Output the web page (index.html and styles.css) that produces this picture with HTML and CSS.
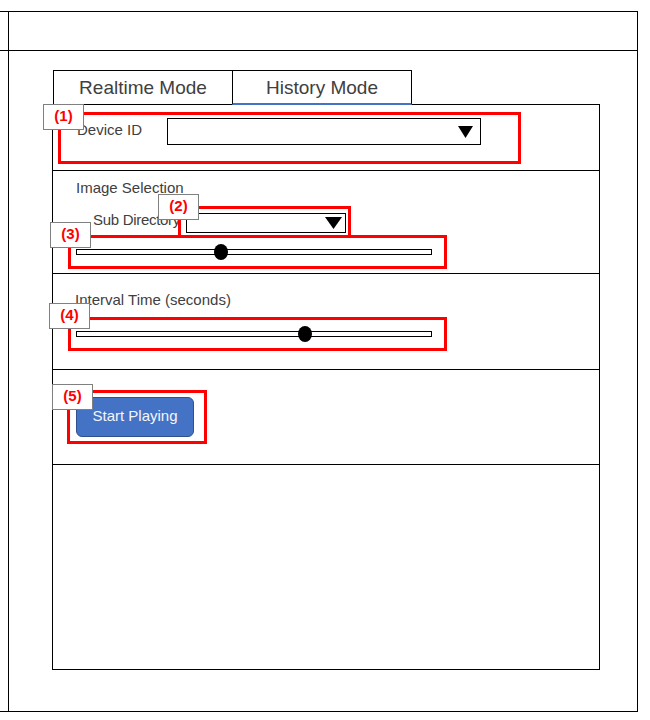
FILE: index.html
```html
<!DOCTYPE html>
<html lang="en">
<head>
<meta charset="utf-8">
<title>History Mode</title>
<link rel="stylesheet" href="styles.css">
</head>
<body>
<div class="frame">
  <div class="side"></div>
  <div class="head"></div>
  <div class="side side-body"></div>
  <div class="main">
    <div class="tabs">
      <div class="tab">Realtime Mode</div>
      <div class="tab tab-active">History Mode</div>
    </div>
    <div class="panel">
      <section class="sec sec-device">
        <div class="mark mark-device">
          <span class="badge badge-1">(1)</span>
          <span class="label label-device">Device ID</span>
          <div class="select select-device">
            <svg class="caret caret-lg" width="15" height="12" viewBox="0 0 15 12"><polygon points="0,0 15,0 7.5,12" fill="#000"/></svg>
          </div>
        </div>
      </section>
      <section class="sec sec-image">
        <div class="label label-title">Image Selection</div>
        <div class="subrow">
          <span class="label label-sub">Sub Directory</span>
          <div class="mark mark-subdir">
            <span class="badge badge-2">(2)</span>
            <div class="select select-sub">
              <svg class="caret caret-sm" width="17" height="12" viewBox="0 0 17 12"><polygon points="0,0 17,0 8.5,12" fill="#000"/></svg>
            </div>
          </div>
        </div>
        <div class="mark mark-slider mark-slider-3">
          <span class="badge badge-3">(3)</span>
          <div class="track"><span class="thumb" style="left:40.7%"></span></div>
        </div>
      </section>
      <section class="sec sec-interval">
        <div class="label label-interval">Interval Time (seconds)</div>
        <div class="mark mark-slider mark-slider-4">
          <span class="badge badge-4">(4)</span>
          <div class="track"><span class="thumb" style="left:64.3%"></span></div>
        </div>
      </section>
      <section class="sec sec-action">
        <div class="mark mark-button">
          <span class="badge badge-5">(5)</span>
          <button class="btn" type="button">Start Playing</button>
        </div>
      </section>
      <section class="sec sec-empty"></section>
    </div>
  </div>
</div>
</body>
</html>
```

FILE: styles.css
```css
* {
  box-sizing: border-box;
}

html, body {
  margin: 0;
  padding: 0;
  background: #fff;
}

body {
  font-family: "Liberation Sans", Arial, "Noto Sans CJK JP", sans-serif;
  color: #404040;
}

.frame {
  margin-top: 11px;
  width: 638px;
  border-top: 1px solid #000;
  border-bottom: 1px solid #000;
  display: grid;
  grid-template-columns: 9px 629px;
  grid-template-rows: 38px 661px;
}

.side {
  border-right: 1px solid #000;
}

.head {
  border-right: 1px solid #000;
}

.side-body {
  border-top: 1px solid #000;
}

.main {
  border-top: 1px solid #000;
  border-right: 1px solid #000;
  padding: 19px 0 0 43px;
}

/* Tabs */
.tabs {
  display: flex;
  margin: 0 0 -1px 1px;
  position: relative;
  z-index: 1;
}

.tab {
  width: 180px;
  height: 35px;
  border: 1px solid #000;
  background: #fff;
  font-size: 19px;
  line-height: 33px;
  text-align: center;
  color: #404040;
}

.tab-active {
  margin-left: -1px;
  border-bottom: 2px solid #4472c4;
}

/* Panel */
.panel {
  width: 548px;
  height: 566px;
  border: 1px solid #000;
  display: flex;
  flex-direction: column;
}

.sec {
  border-bottom: 1px solid #000;
  flex: none;
}

.sec-device { height: 66px; padding-top: 7px; }
.sec-image { height: 103px; padding-top: 8px; }
.sec-interval { height: 96px; padding-top: 17px; }
.sec-action { height: 95px; padding-top: 20px; }
.sec-empty { flex: 1; border-bottom: none; }

.label {
  font-size: 15px;
  line-height: 18px;
  white-space: nowrap;
}

/* Red annotation boxes */
.mark {
  position: relative;
  border: 3px solid #ff0000;
}

.badge {
  position: absolute;
  z-index: 2;
  width: 41px;
  height: 26px;
  border: 1px solid #808080;
  background: #fff;
  color: #ff0000;
  font-size: 15px;
  font-weight: bold;
  line-height: 22px;
  text-align: center;
}

.badge-1 { left: -18px; top: -11px; }
.badge-2 { left: -23px; top: -15px; }
.badge-3 { left: -21px; top: -16px; }
.badge-4 { left: -22px; top: -17px; }
.badge-5 { left: -18px; top: -9px; }

/* Section 1 */
.mark-device {
  margin-left: 5px;
  width: 463px;
  height: 52px;
  padding: 3px 0 0 16px;
  display: flex;
  align-items: flex-start;
}

.label-device {
  width: 90px;
  line-height: 24px;
}

.select {
  border: 1px solid #000;
  background: #fff;
  display: flex;
  align-items: center;
  justify-content: flex-end;
}

.select-device {
  width: 314px;
  height: 27px;
  padding-right: 7px;
}

.caret {
  display: block;
}

/* Section 2 */
.label-title {
  margin-left: 23px;
}

.subrow {
  display: flex;
  align-items: flex-start;
  margin-top: 9px;
  padding-left: 40px;
}

.label-sub {
  width: 85px;
  margin-top: 5px;
  letter-spacing: -0.3px;
}

.mark-subdir {
  width: 173px;
  height: 32px;
  padding: 4px 0 0 5px;
}

.select-sub {
  width: 160px;
  height: 20px;
  padding-right: 3px;
}

.mark-slider {
  width: 379px;
  height: 34px;
  margin-left: 15px;
  padding-left: 5px;
  display: flex;
  align-items: center;
}

.mark-slider-3 {
  margin-top: -3px;
}

.track {
  position: relative;
  width: 356px;
  height: 6px;
  border: 1px solid #000;
  background: #fff;
}

.thumb {
  position: absolute;
  top: 50%;
  width: 14px;
  height: 16px;
  border-radius: 50%;
  background: #000;
  transform: translate(-50%, -50%);
}

/* Section 3 */
.label-interval {
  margin-left: 22px;
}

.mark-slider-4 {
  margin-top: 8px;
}

/* Section 4 */
.mark-button {
  width: 140px;
  height: 54px;
  margin-left: 14px;
  padding: 4px 0 0 6px;
}

.btn {
  display: block;
  width: 118px;
  height: 40px;
  border: 1px solid #2f528f;
  border-radius: 6px;
  background: #4472c4;
  color: #f4f6fb;
  font-family: "Liberation Sans", Arial, sans-serif;
  font-size: 15px;
  padding: 0 0 4px;
  margin: 0;
}
```
